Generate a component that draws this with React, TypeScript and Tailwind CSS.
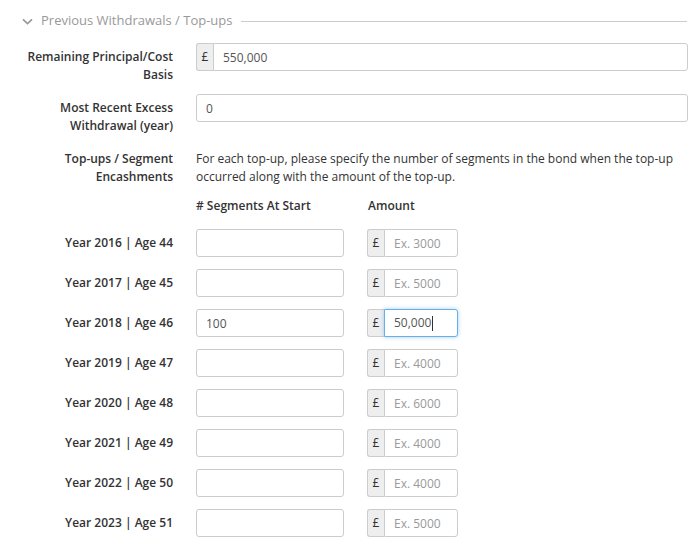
import React from 'react';

interface TopUpRow {
  year: number;
  age: number;
  segments: string;
  amount: string;
  placeholder: string;
  focused?: boolean;
}

const rows: TopUpRow[] = [
  { year: 2016, age: 44, segments: '', amount: '', placeholder: 'Ex. 3000' },
  { year: 2017, age: 45, segments: '', amount: '', placeholder: 'Ex. 5000' },
  { year: 2018, age: 46, segments: '100', amount: '50,000', placeholder: 'Ex. 5000', focused: true },
  { year: 2019, age: 47, segments: '', amount: '', placeholder: 'Ex. 4000' },
  { year: 2020, age: 48, segments: '', amount: '', placeholder: 'Ex. 6000' },
  { year: 2021, age: 49, segments: '', amount: '', placeholder: 'Ex. 4000' },
  { year: 2022, age: 50, segments: '', amount: '', placeholder: 'Ex. 4000' },
  { year: 2023, age: 51, segments: '', amount: '', placeholder: 'Ex. 5000' },
];

const inputCls =
  'h-[28px] border border-[#ccc] bg-white px-[9px] text-[12px] text-[#555] outline-none placeholder:text-[#999]';

const Addon: React.FC = () => (
  <span className="flex h-[28px] w-[17px] shrink-0 items-center justify-center rounded-l-[3px] border border-r-0 border-[#ccc] bg-[#eee] text-[12px] text-[#333]">
    £
  </span>
);

const FieldRow: React.FC<{ label: React.ReactNode; children: React.ReactNode }> = ({ label, children }) => (
  <div className="flex mb-[10px]">
    <div className="w-[173px] shrink-0 pt-[5px] text-right font-semibold leading-[18px]">{label}</div>
    <div className="ml-[23px] flex-1">{children}</div>
  </div>
);

const App: React.FC = () => {
  return (
    <div className="w-[697px] bg-white pt-[12px] pr-[9px] font-['Open_Sans',sans-serif] text-[12px] text-[#333]">
      <div className="flex h-[18px] items-center pl-[22px]">
        <svg width="11" height="7" viewBox="0 0 11 7" className="shrink-0">
          <path d="M1 1.3 L5.5 5.6 L10 1.3" fill="none" stroke="#999" strokeWidth="1.7" />
        </svg>
        <span className="ml-[8px] text-[13px] text-[#999]">Previous Withdrawals / Top-ups</span>
        <div className="ml-[8px] mr-px h-px flex-1 bg-[#ccc]" />
      </div>

      <div className="mt-[13px]">
        <FieldRow label={<>Remaining Principal/Cost<br />Basis</>}>
          <div className="flex">
            <Addon />
            <input readOnly defaultValue="550,000" className={`${inputCls} flex-1 rounded-r-[3px]`} />
          </div>
        </FieldRow>

        <FieldRow label={<>Most Recent Excess<br />Withdrawal (year)</>}>
          <input readOnly defaultValue="0" className={`${inputCls} w-full rounded-[3px]`} />
        </FieldRow>

        <FieldRow label={<>Top-ups / Segment<br />Encashments</>}>
          <p className="pt-[5px] leading-[18px]">
            For each top-up, please specify the number of segments in the bond when the top-up
            <br />
            occurred along with the amount of the top-up.
          </p>
          <div className="mt-[11px] flex font-semibold leading-[18px]">
            <span className="w-[172px]">#&nbsp;Segments At Start</span>
            <span>Amount</span>
          </div>
        </FieldRow>

        <div className="mt-[14px]">
          {rows.map((r) => (
            <div key={r.year} className="mb-[12px] flex h-[28px] items-center">
              <div className="w-[173px] shrink-0 text-right font-semibold">
                Year {r.year} | Age {r.age}
              </div>
              <input
                readOnly
                defaultValue={r.segments}
                className={`${inputCls} ml-[23px] w-[148px] rounded-[3px]`}
              />
              <div className="ml-[23px] flex">
                <Addon />
                {r.focused ? (
                  <div className="flex h-[28px] w-[74px] items-center rounded-r-[3px] border border-[#66afe9] bg-white px-[9px] text-[#555] shadow-[0_0_4px_rgba(102,175,233,0.6)]">
                    {r.amount}
                    <span className="ml-px h-[15px] w-px bg-[#333]" />
                  </div>
                ) : (
                  <input
                    readOnly
                    placeholder={r.placeholder}
                    defaultValue={r.amount}
                    className={`${inputCls} w-[74px] rounded-r-[3px]`}
                  />
                )}
              </div>
            </div>
          ))}
        </div>
      </div>
    </div>
  );
};

export default App;
